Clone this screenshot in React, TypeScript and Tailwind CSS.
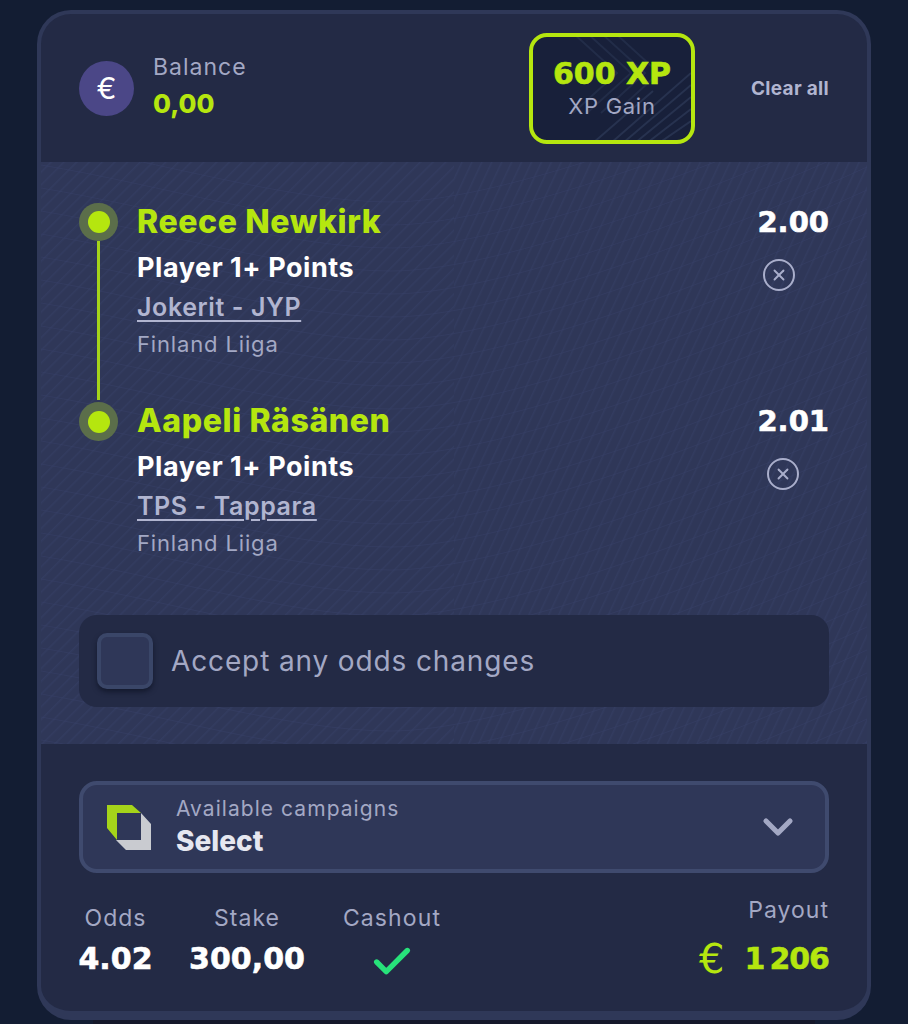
import { ChevronDown, Check, X } from 'lucide-react';

interface Selection {
  player: string;
  market: string;
  match: string;
  league: string;
  odds: string;
  removeClass: string;
  last?: boolean;
}

const selections: Selection[] = [
  {
    player: 'Reece Newkirk',
    market: 'Player 1+ Points',
    match: 'Jokerit - JYP',
    league: 'Finland Liiga',
    odds: '2.00',
    removeClass: 'mr-[34px]',
  },
  {
    player: 'Aapeli Räsänen',
    market: 'Player 1+ Points',
    match: 'TPS - Tappara',
    league: 'Finland Liiga',
    odds: '2.01',
    removeClass: 'mr-[30px]',
    last: true,
  },
];

const stats = [
  { label: 'Odds', value: '4.02', className: 'w-[73px]' },
  { label: 'Stake', value: '300,00', className: 'w-[118px] ml-[36px]' },
];

function WaveBackground() {
  const waves = Array.from({ length: 34 }, (_, i) => i);
  return (
    <>
      <div className="absolute inset-y-0 left-0 w-1/2 bg-[repeating-linear-gradient(135deg,#2f3758_0px,#2f3758_6px,#333c60_7px,#2f3758_9px)]" />
      <div className="absolute inset-y-0 right-0 w-1/2 bg-[repeating-linear-gradient(115deg,#2f3758_0px,#2f3758_6px,#333c60_7px,#2f3758_9px)]" />
      <svg className="absolute inset-0 h-full w-full" viewBox="0 0 826 582" preserveAspectRatio="none" fill="none">
        {waves.map((n) => {
          const y = n * 23 - 20;
          return (
            <path
              key={n}
              d={`M0 ${y} C 120 ${y + 20}, 250 ${y + 60}, 350 ${y + 60} S 650 ${y - 10}, 826 ${y - 90}`}
              stroke="#39436a"
              strokeOpacity="0.45"
              strokeWidth="1"
            />
          );
        })}
      </svg>
    </>
  );
}

function SelectionRow({ selection }: { selection: Selection }) {
  return (
    <div className="flex h-[199px]">
      <div className="relative flex w-[58px] shrink-0 flex-col items-start">
        <div className="mt-[2px] flex h-[39px] w-[39px] items-center justify-center rounded-full bg-[#5b6e4a]">
          <div className="h-[22px] w-[22px] rounded-full bg-[#b5e60f]" />
        </div>
        {!selection.last && <div className="ml-[18px] h-[165px] w-[3px] bg-[#a5d41a]" />}
      </div>
      <div className="flex flex-col">
        <div className="flex h-[42px] items-center text-[32px] font-extrabold tracking-[0.6px] text-[#b5e60f]">{selection.player}</div>
        <div className="mt-[4px] flex h-[42px] items-center text-[27px] font-bold tracking-[0.55px] text-white">{selection.market}</div>
        <div className="flex h-[38px] items-center text-[25px] font-semibold tracking-[0.6px] text-[#b1b5d0] underline decoration-2 underline-offset-[4px]">{selection.match}</div>
        <div className="flex h-[35px] items-center text-[22px] tracking-[0.85px] text-[#a3a8c4]">{selection.league}</div>
      </div>
      <div className="ml-auto flex flex-col items-end">
        <div className="flex h-[44px] items-center font-['DejaVu_Sans'] text-[29px] font-bold text-white [-webkit-text-stroke:0.6px]">{selection.odds}</div>
        <div className={`mt-[14px] flex h-[32px] w-[32px] items-center justify-center rounded-full border-2 border-[#a9aecb] ${selection.removeClass}`}>
          <X className="h-[18px] w-[18px] text-[#a9aecb]" strokeWidth={2.5} />
        </div>
      </div>
    </div>
  );
}

export default function App() {
  return (
    <div className="h-[1024px] overflow-hidden bg-[#131d33] pt-[10px] font-['Inter',sans-serif]">
      <div className="mx-[37px] h-[1010px] overflow-hidden rounded-[34px] border-x-4 border-t-4 border-b-[9px] border-[#2f3858] bg-[#232a45]">
        <header className="flex h-[148px] items-center pl-[38px] pr-[38px]">
          <div className="flex h-[55px] w-[55px] items-center justify-center rounded-full bg-[#4b4787] text-[30px] leading-none text-white">
            €
          </div>
          <div className="ml-[19px] pb-[4px]">
            <div className="text-[23px] leading-[30px] tracking-[1px] text-[#a3a8c4]">Balance</div>
            <div className="mt-[5px] text-[26px] font-extrabold leading-[34px] text-[#b5e60f]">0,00</div>
          </div>
          <div className="relative ml-auto flex h-[111px] w-[166px] flex-col items-center justify-center overflow-hidden rounded-[18px] border-4 border-[#b5e60f] bg-[#18203a]">
            <svg className="absolute inset-0 h-full w-full" viewBox="0 0 158 103" fill="none" stroke="#27324f" strokeWidth="2">
              <path d="M40 -4l44 40-44 40M54 -4l44 40-44 40M68 -4l44 40-44 40M82 -4l44 40-44 40" strokeOpacity="0.7" />
              <path d="M78 106l80-70M90 106l68-58M102 106l56-46M114 106l44-34M126 106l32-22M60 106l60-52" />
            </svg>
            <div className="relative font-['DejaVu_Sans'] text-[30px] font-bold leading-[36px] text-[#b5e60f] [-webkit-text-stroke:0.6px]">600 XP</div>
            <div className="relative text-[22px] leading-[28px] tracking-[0.7px] text-[#a3a8c4]">XP Gain</div>
          </div>
          <button className="ml-[56px] pt-[2px] text-[19px] font-bold tracking-[0.3px] text-[#b1b5d0]">Clear all</button>
        </header>

        <section className="relative h-[582px] bg-[#2f3758] px-[38px] pt-[39px]">
          <WaveBackground />
          <div className="relative">
            {selections.map((selection) => (
              <SelectionRow key={selection.player} selection={selection} />
            ))}
            <div className="mt-[16px] flex h-[92px] items-center rounded-[18px] bg-[#232a45] pl-[18px]">
              <div className="h-[56px] w-[56px] rounded-[10px] border-4 border-[#3a4668] bg-[#2f3758] shadow-[0_3px_5px_rgba(10,15,30,0.6)]" />
              <span className="ml-[18px] text-[28px] tracking-[0.87px] text-[#a3a8c4]">Accept any odds changes</span>
            </div>
          </div>
        </section>

        <section className="px-[38px] pt-[37px]">
          <div className="flex h-[92px] items-center rounded-[18px] border-4 border-[#3f4a6e] bg-[#2f3758] pl-[24px] pr-[23px]">
            <svg className="h-[46px] w-[46px] shrink-0" viewBox="0 0 46 46" fill="none">
              <path d="M0 1h25l9 8H10v27l-10-12z" fill="#a5d41a" />
              <path d="M34 9l10 11v26H19L9 36h25z" fill="#c9cbd0" />
            </svg>
            <div className="ml-[23px]">
              <div className="text-[21px] leading-[28px] tracking-[1.05px] text-[#a3a8c4]">Available campaigns</div>
              <div className="text-[28px] font-extrabold leading-[36px] text-[#e6e7f0]">Select</div>
            </div>
            <ChevronDown className="ml-auto h-[48px] w-[48px] text-[#a3a8c4]" strokeWidth={2.6} />
          </div>

          <div className="mt-[21px] flex items-start">
            {stats.map((stat) => (
              <div key={stat.label} className={`flex flex-col items-center ${stat.className}`}>
                <div className="mt-[10px] text-[23px] leading-[28px] tracking-[1px] text-[#a3a8c4]">{stat.label}</div>
                <div className="mt-[9px] font-['DejaVu_Sans'] text-[30px] font-bold leading-[36px] text-white [-webkit-text-stroke:0.6px]">{stat.value}</div>
              </div>
            ))}
            <div className="ml-[36px] flex w-[100px] flex-col items-center">
              <div className="mt-[10px] text-[23px] leading-[28px] tracking-[1.1px] text-[#a3a8c4]">Cashout</div>
              <Check className="mt-[7px] h-[46px] w-[46px] text-[#27e27a]" strokeWidth={2.8} />
            </div>
            <div className="ml-auto flex flex-col items-end">
              <div className="mt-[2px] text-[23px] leading-[28px] tracking-[1px] text-[#a3a8c4]">Payout</div>
              <div className="mt-[17px] flex items-center font-['DejaVu_Sans'] text-[30px] font-bold leading-[36px] tracking-[-1px] text-[#b5e60f] [-webkit-text-stroke:0.5px]">
                <span className="mr-[21px] text-[40px] font-normal [-webkit-text-stroke:0px]">€</span>1{'\u2009'}206
              </div>
            </div>
          </div>
        </section>
      </div>
      <div className="mx-[93px] h-[4px] bg-[#15182a]" />
    </div>
  );
}
